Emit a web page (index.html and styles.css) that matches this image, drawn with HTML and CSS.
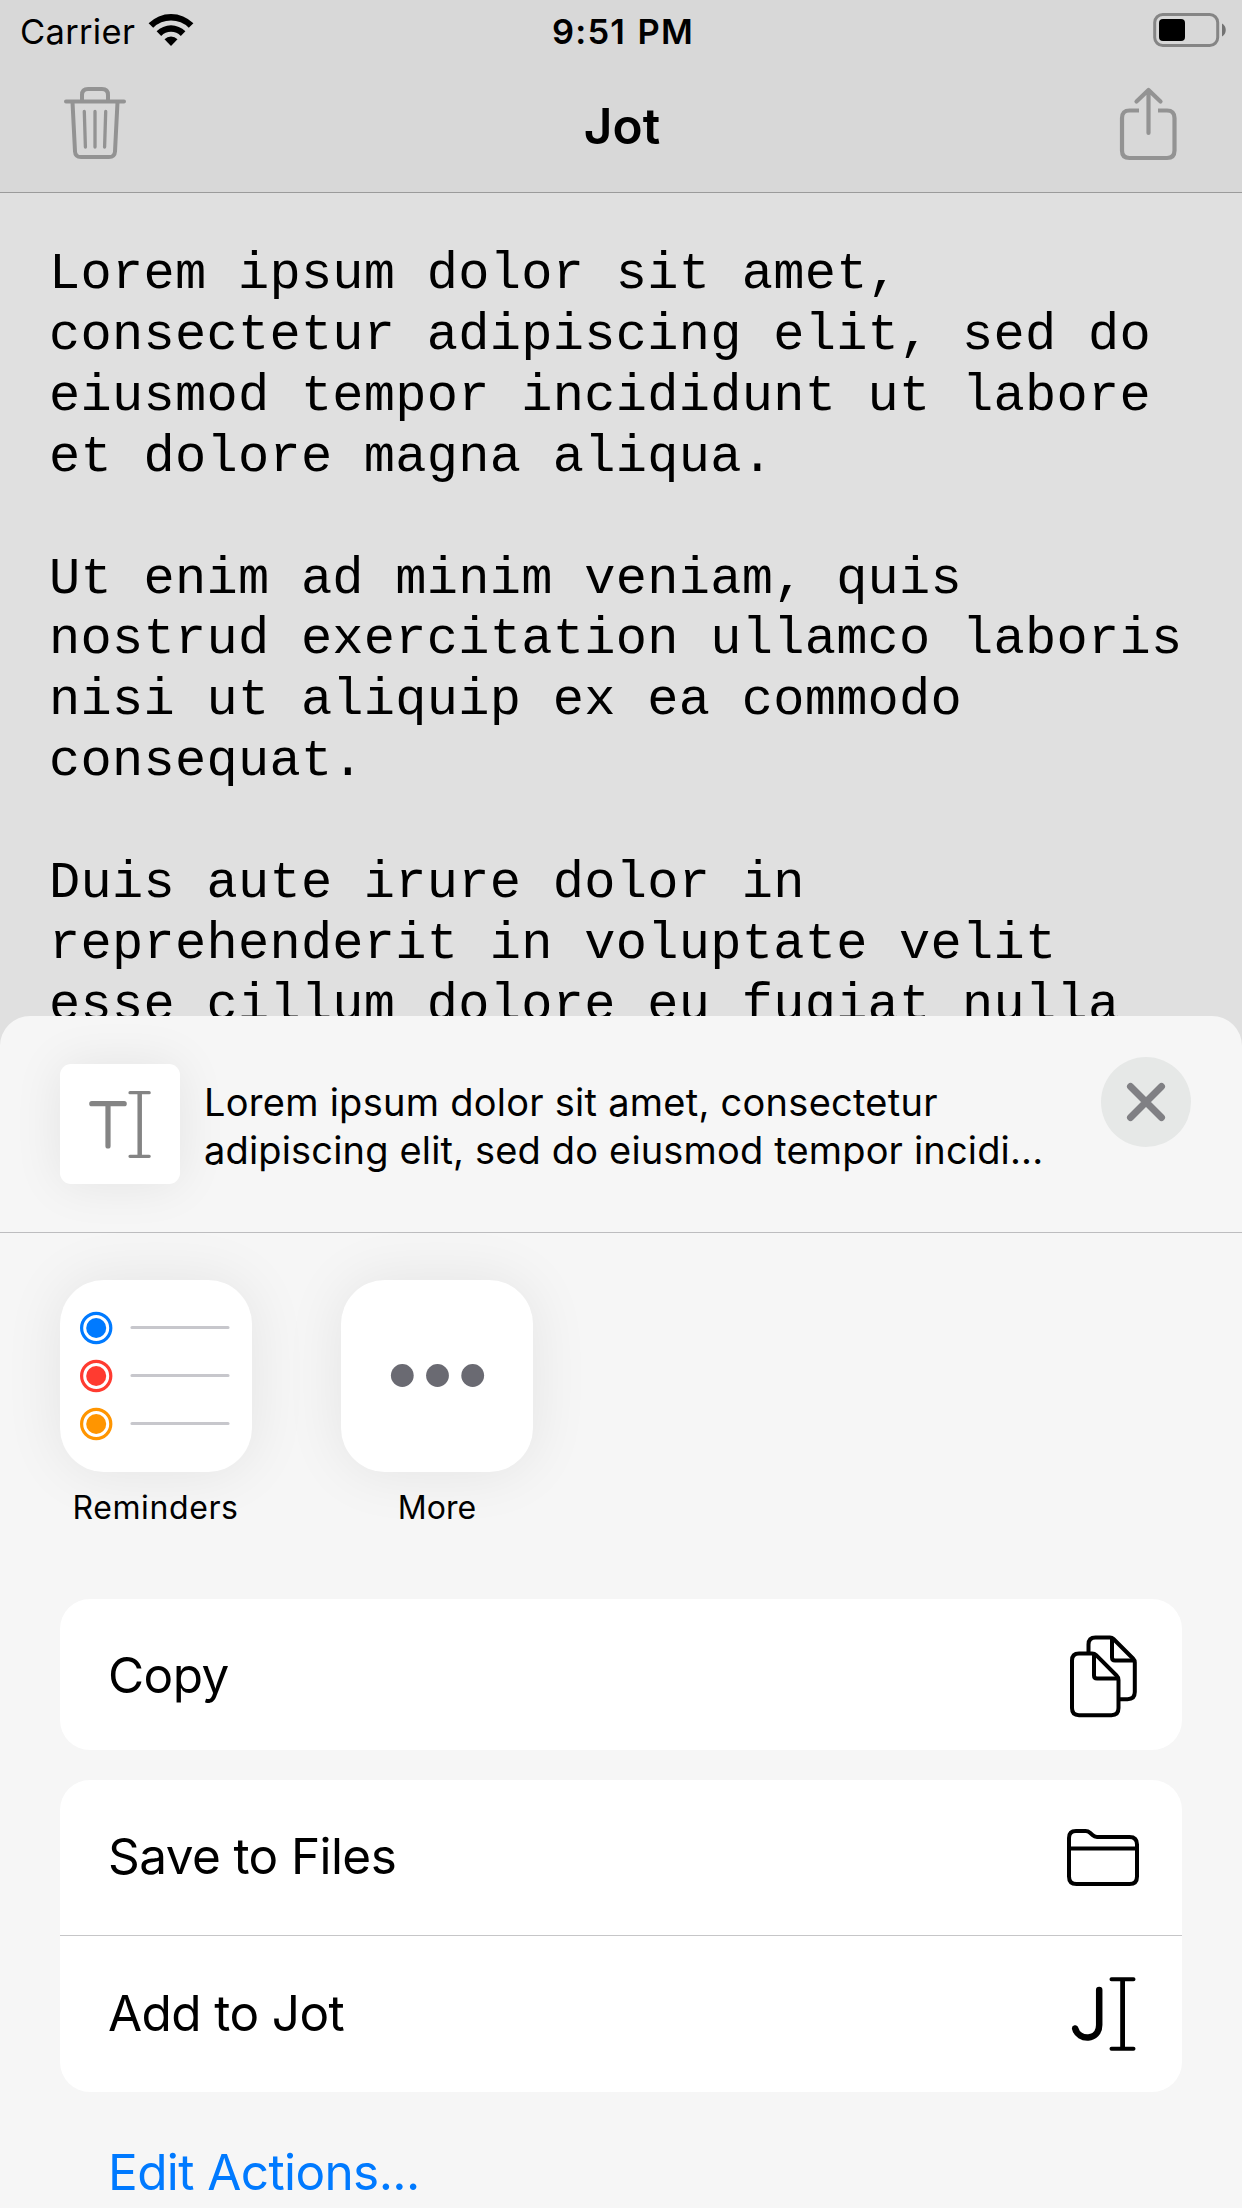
FILE: index.html
```html
<!DOCTYPE html>
<html lang="en">
<head>
<meta charset="utf-8">
<title>Jot</title>
<link rel="stylesheet" href="styles.css">
</head>
<body>
<div class="screen">
  <header class="top">
    <div class="status">
      <div class="status-left">
        <span class="carrier">Carrier</span>
        <svg class="wifi" width="46" height="34" viewBox="0 0 46 34">
          <path d="M0.6 10.3A31.7 31.7 0 0 1 45.4 10.3L40.8 14.8A25.2 25.2 0 0 0 5.2 14.8Z"/>
          <path d="M8.6 18.3A20.4 20.4 0 0 1 37.4 18.3L32.8 22.9A13.9 13.9 0 0 0 13.2 22.9Z"/>
          <path d="M16.5 26.3A9.2 9.2 0 0 1 29.5 26.3L23 33Z"/>
        </svg>
      </div>
      <span class="time">9:51 PM</span>
      <svg class="battery" width="74" height="36" viewBox="0 0 74 36">
        <rect x="2.7" y="2.5" width="63" height="31" rx="8" fill="none" stroke="#858585" stroke-width="3"/>
        <rect x="7" y="7" width="26" height="22" rx="4"/>
        <path d="M70 11.500C75 14 75 22 70 24.500Z" fill="#737373"/>
      </svg>
    </div>
    <nav class="nav">
      <svg class="trash" width="64" height="74" viewBox="0 0 64 74" fill="none" stroke="#939393" stroke-width="4" stroke-linecap="round" stroke-linejoin="round">
        <path d="M3 15.500H61M19 15V9Q19 3 25 3H39Q45 3 45 9V15"/>
        <path d="M9.500 16L12 65.500Q12.300 71 18 71H46Q51.700 71 52 65.500L54.500 16"/>
        <path stroke-width="3.300" d="M21.300 25.500L22.400 61M32 25.500V61M42.700 25.500L41.600 61"/>
      </svg>
      <h1 class="title">Jot</h1>
      <svg class="share" width="58" height="74" viewBox="0 0 58 74" fill="none" stroke="#939393" stroke-width="4.200">
        <path d="M20 23.500H10.500Q3 23.500 3 31V63.500Q3 71 10.500 71H48Q55.500 71 55.500 63.500V31Q55.500 23.500 48 23.500H39"/>
        <path stroke-linecap="round" stroke-linejoin="round" d="M29.500 46V3.500M17.500 14.500L29.500 3L41.500 14.500"/>
      </svg>
    </nav>
  </header>

  <main class="note">Lorem ipsum dolor sit amet,
consectetur adipiscing elit, sed do
eiusmod tempor incididunt ut labore
et dolore magna aliqua.

Ut enim ad minim veniam, quis
nostrud exercitation ullamco laboris
nisi ut aliquip ex ea commodo
consequat.

Duis aute irure dolor in
reprehenderit in voluptate velit
esse cillum dolore eu fugiat nulla</main>

  <section class="sheet">
    <div class="sheet-head">
      <div class="thumb">
        <svg width="120" height="120" viewBox="0 0 120 120" fill="none" stroke="#848484" stroke-linecap="round">
          <path stroke-width="5.200" d="M31.800 39.700H64.200M48 40V82"/>
          <path stroke-width="3.200" d="M70 28.700H89.200M70 92.300H89.200"/>
          <path stroke-width="4.500" stroke-linecap="butt" d="M79.700 29V92"/>
        </svg>
      </div>
      <p class="summary"><span class="line-a">Lorem ipsum dolor sit amet, consectetur</span><br><span class="line-b">adipiscing elit, sed do eiusmod tempor incidi...</span></p>
      <button class="close" aria-label="Close">
        <svg width="90" height="90" viewBox="0 0 90 90"><path d="M29.500 29.500L60.500 60.500M60.500 29.500L29.500 60.500" stroke="#808084" stroke-width="7" stroke-linecap="round"/></svg>
      </button>
    </div>

    <div class="apps">
      <div class="app">
        <div class="app-icon">
          <svg width="192" height="192" viewBox="0 0 192 192">
            <g fill="none" stroke-width="3.200">
              <circle cx="36.200" cy="48" r="14.600" stroke="#007aff"/>
              <circle cx="36.200" cy="96" r="14.600" stroke="#ff3b30"/>
              <circle cx="36.200" cy="144" r="14.600" stroke="#ff9500"/>
            </g>
            <circle cx="36.200" cy="48" r="10" fill="#007aff"/>
            <circle cx="36.200" cy="96" r="10" fill="#ff3b30"/>
            <circle cx="36.200" cy="144" r="10" fill="#ff9500"/>
            <path d="M72 47.500H168M72 95.500H168M72 143.500H168" stroke="#c7c7cc" stroke-width="3.200" stroke-linecap="round"/>
          </svg>
        </div>
        <span class="app-name reminders">Reminders</span>
      </div>
      <div class="app">
        <div class="app-icon">
          <svg width="192" height="192" viewBox="0 0 192 192" fill="#6a6a72">
            <circle cx="61.300" cy="95.500" r="11.400"/><circle cx="96.500" cy="95.500" r="11.400"/><circle cx="131.700" cy="95.500" r="11.400"/>
          </svg>
        </div>
        <span class="app-name">More</span>
      </div>
    </div>

    <div class="actions">
      <div class="card">
        <div class="row row-copy">
          <span>Copy</span>
          <svg width="72" height="84" viewBox="0 0 72 84" fill="none" stroke="#000" stroke-width="4" stroke-linejoin="round">
            <path d="M20.500 18V9.500Q20.500 2.500 27.500 2.500H42Q44 2.500 45.500 4L65 23.500Q66.800 25.300 66.800 27.500V57Q66.800 64.200 59.500 64.200H51"/>
            <path d="M44 3V22.500Q44 25.500 47 25.500H66"/>
            <path d="M11 18.500H24Q26.500 18.500 28.200 20.200L48.500 40.500Q50.500 42.500 50.500 45V73Q50.500 80.200 43.500 80.200H11Q4 80.200 4 73V25.500Q4 18.500 11 18.500Z"/>
            <path d="M26 19V40.500Q26 43.500 29 43.500H50"/>
          </svg>
        </div>
      </div>
      <div class="card">
        <div class="row row-save">
          <span>Save to Files</span>
          <svg width="72" height="60" viewBox="0 0 72 60" fill="none" stroke="#000" stroke-width="4">
            <path d="M9 3H18.500Q21 3 23 4.800L25.500 7Q27.500 8.900 30 8.900H62.500Q70 8.900 70 16.400V48.500Q70 56 62.500 56H9.500Q2 56 2 48.500V10Q2 3 9 3Z"/>
            <path d="M2 20.500H70"/>
          </svg>
        </div>
        <div class="row row-add">
          <span>Add to Jot</span>
          <svg width="72" height="78" viewBox="0 0 72 78" fill="none" stroke="#000" stroke-linecap="round">
            <path stroke-width="6.500" d="M32.200 15V50C32.200 66 11.200 66 8.200 53.500"/>
            <path stroke-width="4" d="M44.500 4.200H66.500M44.500 73.800H66.500"/>
            <path stroke-width="4.800" stroke-linecap="butt" d="M55.600 4V74"/>
          </svg>
        </div>
      </div>
      <a class="edit">Edit Actions...</a>
    </div>
  </section>
</div>
</body>
</html>
```
FILE: styles.css
```css
* { box-sizing: border-box; margin: 0; padding: 0; }
body { font-family: Inter, "Liberation Sans", sans-serif; color: #000; }
svg { display: block; flex: none; }
.screen { position: relative; width: 1242px; height: 2208px; overflow: hidden; background: #e0e0e0; }

.top { height: 193px; background: #d8d8d8; border-bottom: 1px solid #9b9b9b; }
.status { height: 60px; padding: 3px 16px 0 20px; display: grid; grid-template-columns: 1fr auto 1fr; align-items: center; font-size: 34.5px; line-height: 57px; }
.status-left { display: flex; align-items: center; gap: 13px; }
.carrier { letter-spacing: 0.3px; }
.time { font-weight: 600; letter-spacing: 1.2px; word-spacing: 1.5px; }
.wifi { margin-top: -4px; }
.battery { justify-self: end; margin-top: -3px; }
.nav { height: 132px; padding: 0 65px 0 63px; display: grid; grid-template-columns: 1fr auto 1fr; align-items: center; }
.trash { margin-top: -6px; }
.share { justify-self: end; margin-top: -4px; }
.title { padding-left: 4px; font-size: 49.5px; font-weight: 600; line-height: 60px; }

.note { padding: 52px 0 0 49px; font-family: "Liberation Mono", monospace; font-size: 52px; line-height: 60.9px; letter-spacing: 0.28px; white-space: pre; }

.sheet { position: absolute; left: 0; right: 0; top: 1016px; bottom: 0; background: #f6f6f6; border-radius: 30px 30px 0 0; }
.sheet-head { height: 217px; padding: 41px 51px 0 60px; display: flex; align-items: flex-start; border-bottom: 1px solid #bdbdbf; }
.thumb { width: 120px; height: 120px; margin-top: 7px; border-radius: 11px; background: #fff; box-shadow: 0 0 50px rgba(0, 0, 0, .08); }
.summary { flex: 1; padding: 21px 0 0 24px; font-size: 38px; line-height: 48px; white-space: nowrap; }
.line-a { letter-spacing: 0.26px; }
.line-b { letter-spacing: 0.16px; }
.close { width: 90px; height: 90px; border: 0; border-radius: 50%; background: #e6e8e7; }

.apps { display: flex; gap: 89px; padding: 47px 60px 0; }
.app { width: 192px; text-align: center; }
.app-icon { height: 192px; border-radius: 44px; background: #fff; box-shadow: 0 0 60px rgba(0, 0, 0, .08); }
.app-name { display: block; margin-top: 16px; font-size: 32px; line-height: 40px; }
.reminders { letter-spacing: 0.6px; margin-left: -1px; }

.actions { display: flex; flex-direction: column; gap: 30px; padding: 71px 60px 0; font-size: 49.5px; letter-spacing: -0.6px; }
.card { border-radius: 30px; background: #fff; }
.row { display: flex; align-items: center; justify-content: space-between; padding: 0 43px 0 48px; }
.row-copy { height: 151px; padding-right: 42px; }
.row-copy svg { margin-top: 4px; }
.row-save { height: 155px; }
.row-add { height: 157px; border-top: 1px solid #c6c6c8; }
.row-save span, .row-add span { margin-top: -3px; }
.edit { padding-left: 48px; margin-top: 20px; line-height: 60px; color: #007aff; }
```
